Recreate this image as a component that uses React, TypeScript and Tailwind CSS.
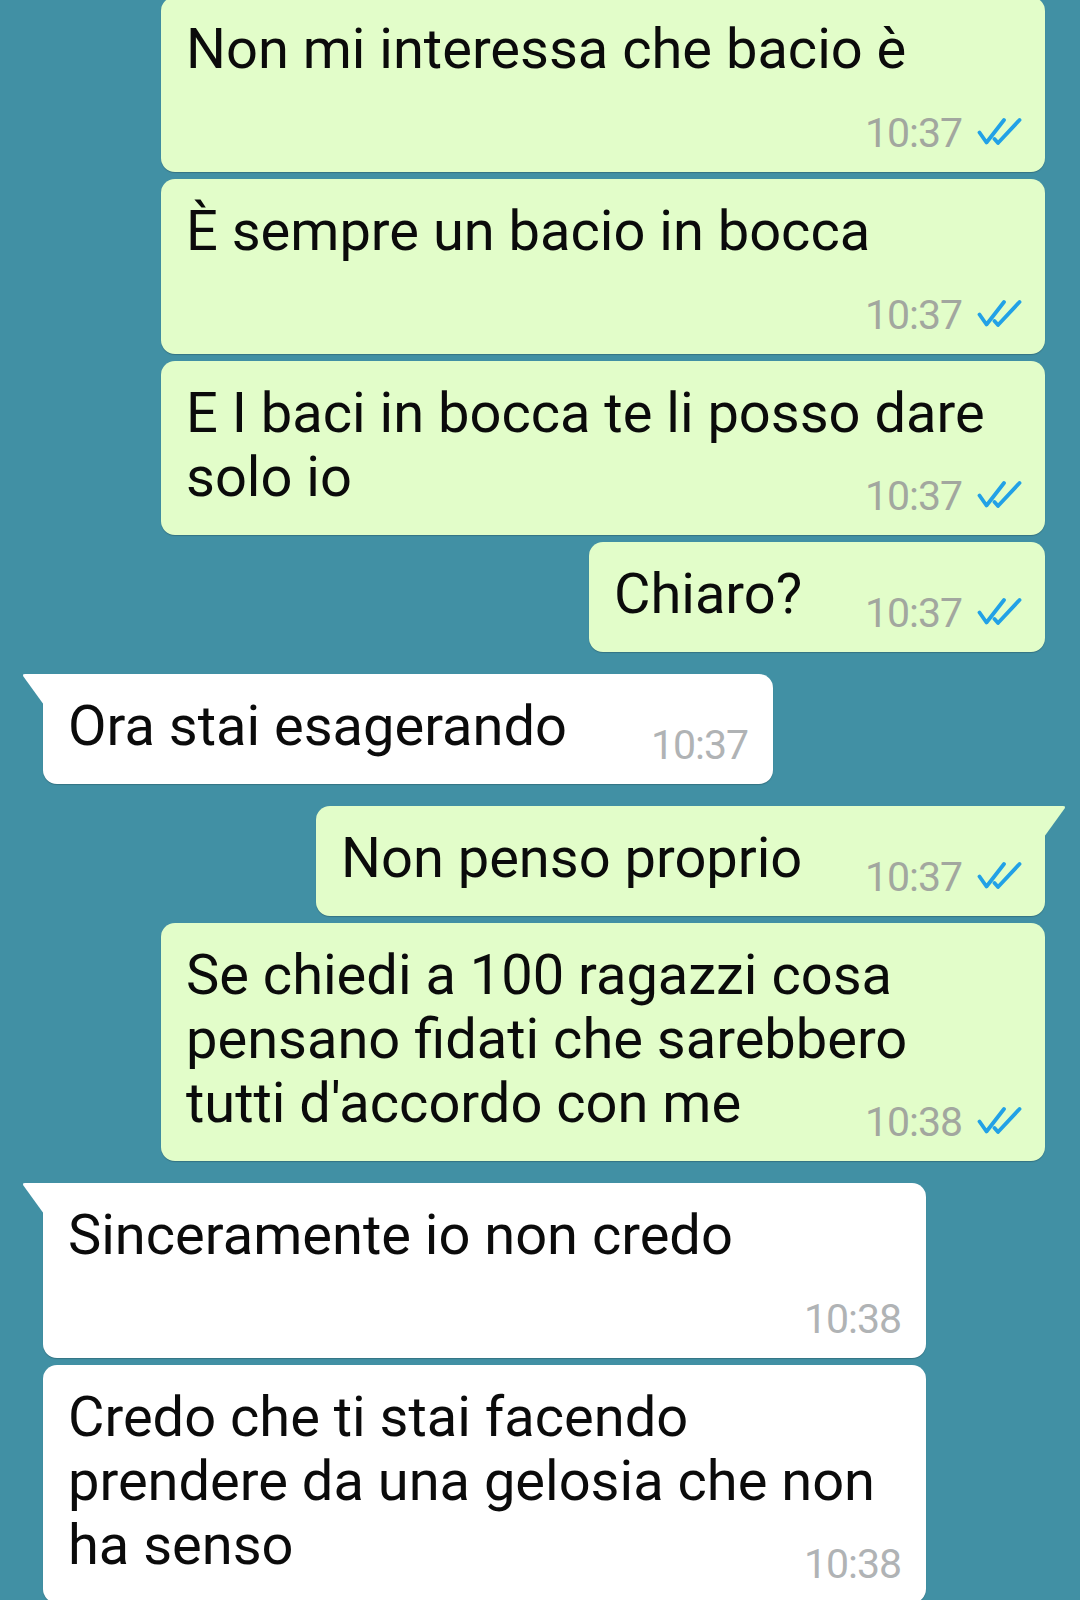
import clsx from 'clsx';

type Message = {
  out: boolean;
  lines: string[];
  time: string;
  width: string;
  tail?: boolean;
  first?: boolean;
  timeBelow?: boolean;
};

const messages: Message[] = [
  { out: true, lines: ['Non mi interessa che bacio è'], time: '10:37', width: 'w-[884px]', timeBelow: true },
  { out: true, lines: ['È sempre un bacio in bocca'], time: '10:37', width: 'w-[884px]', timeBelow: true },
  { out: true, lines: ['E I baci in bocca te li posso dare', 'solo io'], time: '10:37', width: 'w-[884px]' },
  { out: true, lines: ['Chiaro?'], time: '10:37', width: 'w-[456px]' },
  { out: false, lines: ['Ora stai esagerando'], time: '10:37', width: 'w-[730px]', tail: true, first: true },
  { out: true, lines: ['Non penso proprio'], time: '10:37', width: 'w-[729px]', tail: true, first: true },
  {
    out: true,
    lines: ['Se chiedi a 100 ragazzi cosa', 'pensano fidati che sarebbero', "tutti d'accordo con me"],
    time: '10:38',
    width: 'w-[884px]',
  },
  { out: false, lines: ['Sinceramente io non credo'], time: '10:38', width: 'w-[883px]', tail: true, first: true, timeBelow: true },
  {
    out: false,
    lines: ['Credo che ti stai facendo', 'prendere da una gelosia che non', 'ha senso'],
    time: '10:38',
    width: 'w-[883px]',
  },
];

const DoubleCheck = () => (
  <svg viewBox="0 0 45 29" className="h-[29px] w-[45px] shrink-0" fill="none" stroke="#22a1e6" strokeWidth="3.8" strokeLinecap="round" strokeLinejoin="round">
    <path d="M2.5 15.5 L9.5 25.5 L27 3" />
    <path d="M17.5 22 L21 26 L42.5 3" />
  </svg>
);

const Time = ({ time, out }: { time: string; out: boolean }) => (
  <div className="flex shrink-0 items-end gap-[15px]">
    <span className={clsx('text-[41px] leading-[26px] tracking-[-1px]', out ? 'text-[#a2a79f]' : 'text-[#b0b3b5]')}>{time}</span>
    {out && <DoubleCheck />}
  </div>
);

const Bubble = ({ m, index }: { m: Message; index: number }) => {
  const last = m.lines[m.lines.length - 1];
  return (
    <div
      className={clsx(
        'relative rounded-[14px] pt-5 pb-[26px] pl-[25px] text-[56px] leading-[64px] text-[#0b0b0b] shadow-[0_1px_1px_rgba(0,0,0,0.2)]',
        m.out ? 'mr-[35px] self-end bg-[#e2fdc9] pr-[23px]' : 'ml-[43px] self-start bg-white pr-[25px]',
        m.width,
        m.tail && (m.out ? 'rounded-tr-none' : 'rounded-tl-none'),
        index === 0 ? 'mt-[-3px]' : m.first ? 'mt-[22px]' : 'mt-[7px]'
      )}
    >
      {m.tail && !m.out && (
        <svg viewBox="0 0 22 31" className="absolute top-0 -left-[21px] h-[31px] w-[22px]">
          <path d="M22 0 L3 0 Q0 0 1.4 2.4 L22 31 Z" fill="#ffffff" />
        </svg>
      )}
      {m.tail && m.out && (
        <svg viewBox="0 0 22 31" className="absolute top-0 -right-[21px] h-[31px] w-[22px]">
          <path d="M0 0 L19 0 Q22 0 20.6 2.4 L0 31 Z" fill="#e2fdc9" />
        </svg>
      )}
      {m.lines.slice(0, -1).map((line) => (
        <div key={line} className="whitespace-nowrap">{line}</div>
      ))}
      {m.timeBelow ? (
        <>
          <div className="whitespace-nowrap">{last}</div>
          <div className={clsx('flex justify-end', m.out ? 'mt-[36px]' : 'mt-[39px]')}>
            <Time time={m.time} out={m.out} />
          </div>
        </>
      ) : (
        <div className="flex items-end justify-between gap-4">
          <span className="whitespace-nowrap">{last}</span>
          <Time time={m.time} out={m.out} />
        </div>
      )}
    </div>
  );
};

export default function App() {
  return (
    <div className="flex h-[1600px] flex-col overflow-hidden bg-[#4190a4] font-['Roboto',sans-serif]">
      {messages.map((m, i) => (
        <Bubble key={i} m={m} index={i} />
      ))}
    </div>
  );
}
